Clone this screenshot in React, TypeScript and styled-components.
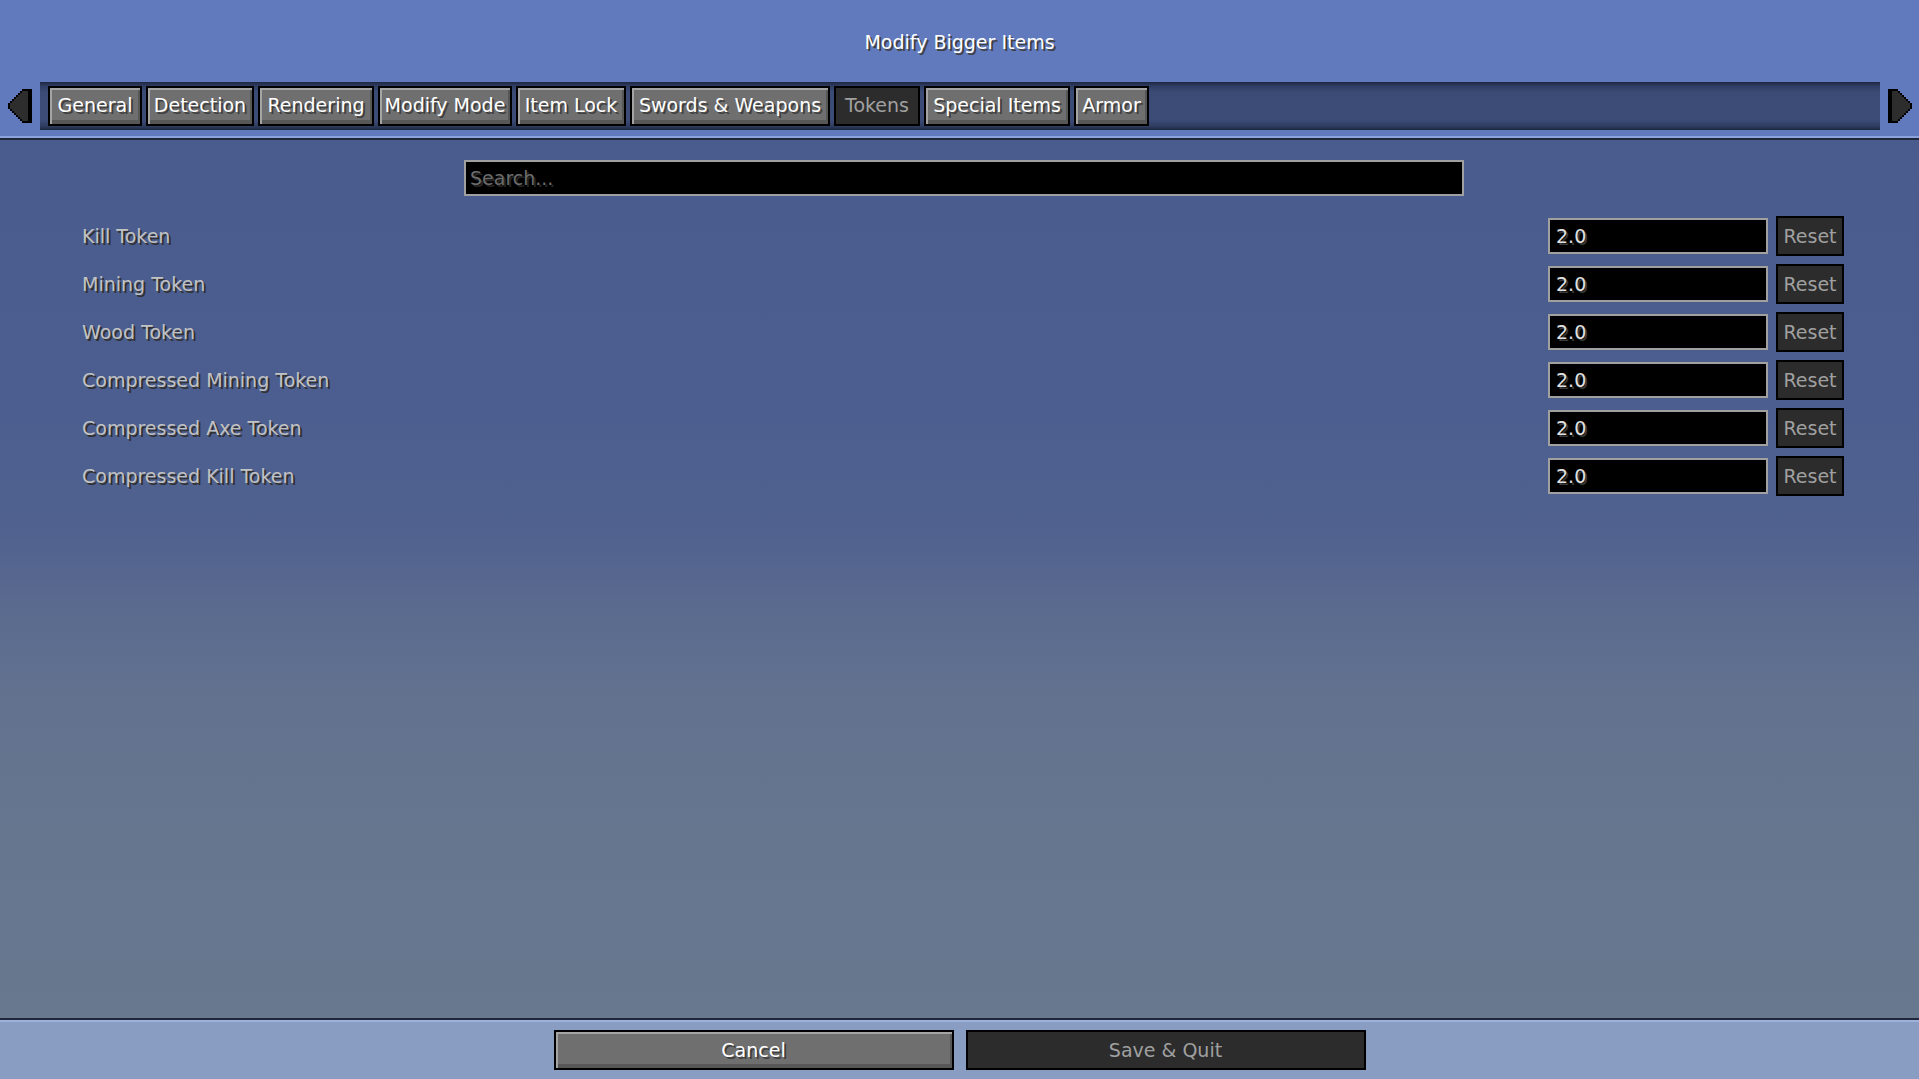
import React from 'react';
import styled, { createGlobalStyle, css } from 'styled-components';

const GlobalStyle = createGlobalStyle`
  html, body {
    margin: 0;
    height: 100%;
    overflow: hidden;
  }
  body {
    font-family: "DejaVu Sans", "Liberation Sans", sans-serif;
    font-size: 19px;
  }
`;

interface Tab {
  label: string;
  width: number;
  selected?: boolean;
}

const TABS: Tab[] = [
  { label: 'General', width: 94 },
  { label: 'Detection', width: 108 },
  { label: 'Rendering', width: 116 },
  { label: 'Modify Mode', width: 134 },
  { label: 'Item Lock', width: 110 },
  { label: 'Swords & Weapons', width: 200 },
  { label: 'Tokens', width: 86, selected: true },
  { label: 'Special Items', width: 146 },
  { label: 'Armor', width: 75 },
];

const ENTRIES = [
  { name: 'Kill Token', value: '2.0' },
  { name: 'Mining Token', value: '2.0' },
  { name: 'Wood Token', value: '2.0' },
  { name: 'Compressed Mining Token', value: '2.0' },
  { name: 'Compressed Axe Token', value: '2.0' },
  { name: 'Compressed Kill Token', value: '2.0' },
];

// pixel-art scroll arrow, drawn on a 12x17 grid of 2px cells
const ScrollArrow = ({ dir }: { dir: 'left' | 'right' }) => {
  const cells: React.ReactNode[] = [];
  for (let c = 0; c < 12; c++) {
    const half = Math.min(c + 1, 8);
    const top = 8 - half;
    const bot = 8 + half;
    const x = dir === 'left' ? c : 11 - c;
    cells.push(<rect key={`o${c}`} x={x} y={top} width={1} height={bot - top + 1} fill="#000" />);
    if (c > 0 && c < 10) {
      cells.push(<rect key={`f${c}`} x={x} y={top + 1} width={1} height={bot - top - 1} fill="#2d2d2d" />);
    }
  }
  return (
    <svg width="24" height="34" viewBox="0 0 12 17" shapeRendering="crispEdges">
      {cells}
    </svg>
  );
};

const Screen = styled.div`
  width: 100vw;
  height: 100vh;
  display: flex;
  flex-direction: column;
`;

const Header = styled.header`
  height: 136px;
  box-sizing: border-box;
  padding-top: 30px;
  background: #607abd;
  display: flex;
  flex-direction: column;
`;

const shadowText = css`
  color: #ffffff;
  text-shadow: 2px 2px 0 #3f3f3f;
`;

const Title = styled.h1`
  margin: 0;
  font-size: 19px;
  font-weight: normal;
  line-height: 24px;
  text-align: center;
  ${shadowText};
`;

const TabRow = styled.div`
  margin-top: 28px;
  height: 48px;
  display: flex;
  align-items: center;
  gap: 8px;
  padding: 0 7px 0 8px;
`;

const Arrow = styled.div`
  width: 24px;
  height: 34px;
  display: flex;
`;

const TabStrip = styled.nav`
  flex: 1;
  height: 48px;
  display: flex;
  align-items: center;
  gap: 4px;
  padding-left: 8px;
  background: linear-gradient(
    to bottom,
    #1e2740 0,
    #2f3d62 4px,
    #3b4b75 10px,
    #3c4c76 calc(100% - 10px),
    #2f3d62 calc(100% - 4px),
    #1e2740 100%
  );
`;

const buttonFace = css<{ $active: boolean }>`
  box-sizing: border-box;
  border: 2px solid #000;
  display: flex;
  align-items: center;
  justify-content: center;
  font-family: "DejaVu Sans", "Liberation Sans", sans-serif;
  font-size: 19px;
  white-space: nowrap;
  padding: 0;
  cursor: pointer;
  ${p =>
    p.$active
      ? css`
          background: #6f6f6f;
          box-shadow: inset 2px 2px 0 #a4a4a4, inset -2px -4px 0 #575757;
          color: #fff;
          text-shadow: 2px 2px 0 #3f3f3f;
        `
      : css`
          background: #2c2c2c;
          color: #a0a0a0;
        `}
`;

const TabButton = styled.button<{ $active: boolean; $w: number }>`
  ${buttonFace};
  width: ${p => p.$w}px;
  height: 40px;
  padding-bottom: 2px;
`;

const Separator = styled.div<{ $flip?: boolean }>`
  height: 4px;
  background: ${p =>
    p.$flip
      ? 'linear-gradient(to bottom, #1f2639 0 2px, #9cb0da 2px 4px)'
      : 'linear-gradient(to bottom, #8ca2dc 0 2px, #1f2639 2px 4px)'};
`;

const Body = styled.main`
  flex: 1;
  display: flex;
  flex-direction: column;
  padding-top: 20px;
  background: linear-gradient(
    to bottom,
    #495c8d 0%,
    #4b5e8f 30%,
    #51628f 45%,
    #5c6c8f 55%,
    #63738f 65%,
    #66768f 80%,
    #68788f 100%
  );
`;

const fieldBox = css`
  box-sizing: border-box;
  height: 36px;
  border: 2px solid #a0a0a0;
  background: #000;
  outline: none;
  font-family: "DejaVu Sans", "Liberation Sans", sans-serif;
  font-size: 19px;
  color: #e0e0e0;
  text-shadow: 2px 2px 0 #383838;
`;

const SearchField = styled.input`
  ${fieldBox};
  width: 1000px;
  margin-left: 464px;
  padding: 0 4px;
  &::placeholder {
    color: #6c6c6c;
    text-shadow: 2px 2px 0 #262626;
  }
`;

const EntryList = styled.div`
  margin-top: 20px;
  display: flex;
  flex-direction: column;
  gap: 8px;
  padding: 0 75px 0 82px;
`;

const EntryRow = styled.div`
  height: 40px;
  display: flex;
  align-items: center;
`;

const EntryName = styled.span`
  flex: 1;
  color: #c2c2c2;
  text-shadow: 2px 2px 0 #303030;
`;

const ValueField = styled.input`
  ${fieldBox};
  width: 220px;
  margin-right: 8px;
  padding: 0 6px;
`;

const ResetButton = styled.button<{ $active: boolean }>`
  ${buttonFace};
  width: 68px;
  height: 40px;
`;

const Footer = styled.footer`
  height: 57px;
  box-sizing: border-box;
  padding-top: 8px;
  background: #899cc1;
  display: flex;
  justify-content: center;
  gap: 12px;
`;

const FooterButton = styled.button<{ $active: boolean }>`
  ${buttonFace};
  width: 400px;
  height: 40px;
`;

export default function App() {
  return (
    <Screen>
      <GlobalStyle />
      <Header>
        <Title>Modify Bigger Items</Title>
        <TabRow>
          <Arrow>
            <ScrollArrow dir="left" />
          </Arrow>
          <TabStrip>
            {TABS.map(t => (
              <TabButton key={t.label} $w={t.width} $active={!t.selected}>
                {t.label}
              </TabButton>
            ))}
          </TabStrip>
          <Arrow>
            <ScrollArrow dir="right" />
          </Arrow>
        </TabRow>
      </Header>
      <Separator />
      <Body>
        <SearchField placeholder="Search..." />
        <EntryList>
          {ENTRIES.map(e => (
            <EntryRow key={e.name}>
              <EntryName>{e.name}</EntryName>
              <ValueField defaultValue={e.value} />
              <ResetButton $active={false}>Reset</ResetButton>
            </EntryRow>
          ))}
        </EntryList>
      </Body>
      <Separator $flip />
      <Footer>
        <FooterButton $active>Cancel</FooterButton>
        <FooterButton $active={false}>Save &amp; Quit</FooterButton>
      </Footer>
    </Screen>
  );
}
